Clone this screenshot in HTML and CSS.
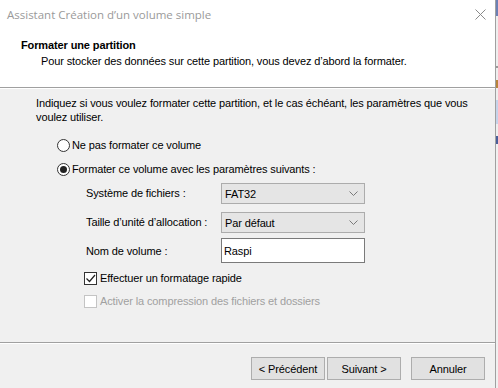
FILE: index.html
```html
<!DOCTYPE html>
<html lang="fr">
<head>
    <meta charset="UTF-8">
    <title>Assistant Création d'un volume simple</title>
    <link rel="stylesheet" href="styles.css">
</head>
<body>

<div class="screen">
    <div class="dialog">
        <header class="head">
            <div class="titlebar">
                <span class="title">Assistant Création d’un volume simple</span>
                <svg class="close" width="11" height="11" viewBox="0 0 11 11">
                    <path d="M0.5 0.5 L10.5 10.5 M10.5 0.5 L0.5 10.5" stroke="#8a8a8a" stroke-width="1" fill="none"/>
                </svg>
            </div>
            <div class="heading">
                <h1>Formater une partition</h1>
                <p>Pour stocker des données sur cette partition, vous devez d’abord la formater.</p>
            </div>
        </header>

        <main class="content">
            <p class="intro">Indiquez si vous voulez formater cette partition, et le cas échéant, les paramètres que vous voulez utiliser.</p>

            <div class="option">
                <span class="radio"></span>
                <span>Ne pas formater ce volume</span>
            </div>
            <div class="option option-second">
                <span class="radio checked"></span>
                <span>Formater ce volume avec les paramètres suivants :</span>
            </div>

            <div class="fields">
                <span class="label">Système de fichiers :</span>
                <div class="select">
                    <span>FAT32</span>
                    <svg width="9" height="5" viewBox="0 0 9 5"><path d="M0.5 0.5 L4.5 4.5 L8.5 0.5" stroke="#7a7a7a" fill="none"/></svg>
                </div>

                <span class="label">Taille d’unité d’allocation :</span>
                <div class="select">
                    <span>Par défaut</span>
                    <svg width="9" height="5" viewBox="0 0 9 5"><path d="M0.5 0.5 L4.5 4.5 L8.5 0.5" stroke="#7a7a7a" fill="none"/></svg>
                </div>

                <span class="label">Nom de volume :</span>
                <div class="textbox">Raspi</div>
            </div>

            <div class="check">
                <span class="box">
                    <svg width="11" height="11" viewBox="0 0 11 11"><path d="M1.5 5.5 L4.5 8.5 L10 2" stroke="#222" stroke-width="1.2" fill="none"/></svg>
                </span>
                <span>Effectuer un formatage rapide</span>
            </div>
            <div class="check check-disabled">
                <span class="box"></span>
                <span>Activer la compression des fichiers et dossiers</span>
            </div>
        </main>

        <footer class="buttons">
            <div class="btn">&lt; Précédent</div>
            <div class="btn">Suivant &gt;</div>
            <div class="btn btn-cancel">Annuler</div>
        </footer>
    </div>

    <div class="sliver">
        <div class="s-top"></div>
        <div class="s-light"></div>
        <div class="s-line"></div>
        <div class="s-light short"></div>
        <div class="s-orange"></div>
        <div class="s-light short"></div>
        <div class="s-blue"></div>
        <div class="s-light short"></div>
        <div class="s-dark"></div>
        <div class="s-rest"></div>
    </div>
</div>

</body>
</html>
```

FILE: styles.css
```css
body {
    margin: 0;
    font-family: "Liberation Sans", Arial, sans-serif;
    font-size: 11px;
    letter-spacing: -0.12px;
    color: #000;
    background: #f0f0f0;
}
.screen {
    display: flex;
    width: 498px;
    height: 388px;
    overflow: hidden;
}
.dialog {
    width: 495px;
    flex: none;
    display: flex;
    flex-direction: column;
    background-color: #f0f0f0;
    border-right: 1px solid #a0a0a0;
}

/* --- header --- */
.head {
    height: 88px;
    box-sizing: border-box;
    background-color: #ffffff;
    border-bottom: 1px solid #a0a0a0;
}
.titlebar {
    height: 28px;
    display: flex;
    align-items: center;
    justify-content: space-between;
    padding: 0 9px 0 7px;
}
.title {
    font-family: "Open Sans", sans-serif;
    font-size: 11.5px;
    letter-spacing: 0;
    color: #9a9a9a;
}
.heading {
    padding: 9px 0 0 21px;
}
.heading h1 {
    margin: 0;
    font-size: 11px;
    font-weight: bold;
    line-height: 16px;
}
.heading p {
    margin: 0 0 0 20px;
    line-height: 16px;
}

/* --- body --- */
.content {
    flex: 1;
    border-top: 1px solid #ffffff;
    padding: 7px 0 0 36px;
}
.intro {
    margin: 0;
    width: 450px;
    line-height: 14px;
}
.option {
    display: flex;
    align-items: center;
    gap: 2px;
    height: 18px;
    margin: 12px 0 0 21px;
}
.option-second {
    margin-top: 6px;
}
.radio {
    width: 11px;
    height: 11px;
    border: 1px solid #333;
    border-radius: 50%;
    background: #fff;
    display: flex;
    align-items: center;
    justify-content: center;
}
.radio.checked::after {
    content: "";
    width: 7px;
    height: 7px;
    border-radius: 50%;
    background: #222;
}
.fields {
    display: grid;
    grid-template-columns: 135px 144px;
    grid-auto-rows: 22px;
    row-gap: 7px;
    margin: 5px 0 0 50px;
}
.label {
    align-self: center;
    padding-bottom: 3px;
}
.select {
    display: flex;
    align-items: center;
    justify-content: space-between;
    background: #e5e5e5;
    border: 1px solid #acacac;
    padding: 0 6px 0 3px;
    box-sizing: border-box;
    height: 21px;
}
.textbox {
    background: #fff;
    border: 1px solid #7a7a7a;
    box-sizing: border-box;
    padding: 0 3px 0 2px;
    display: flex;
    align-items: center;
    margin-top: -3px;
}
.check {
    display: flex;
    align-items: center;
    gap: 3px;
    height: 18px;
    margin: 6px 0 0 48px;
}
.check + .check {
    margin-top: 5px;
}
.box {
    width: 11px;
    height: 11px;
    border: 1px solid #333;
    background: #fff;
    display: flex;
    align-items: center;
    justify-content: center;
}
.check-disabled {
    color: #a0a0a0;
}
.check-disabled .box {
    border-color: #c4c4c4;
}

/* --- buttons --- */
.buttons {
    height: 46px;
    box-sizing: border-box;
    border-top: 1px solid #a0a0a0;
    box-shadow: inset 0 1px #ffffff;
    display: flex;
    justify-content: flex-end;
    align-items: flex-start;
    padding: 14px 10px 0 0;
    gap: 2px;
}
.btn {
    width: 74px;
    height: 23px;
    box-sizing: border-box;
    background: #e1e1e1;
    border: 1px solid #adadad;
    display: flex;
    align-items: center;
    justify-content: center;
}
.btn-cancel {
    margin-left: 8px;
}

/* --- neighbour window edge --- */
.sliver {
    flex: 1;
    display: flex;
    flex-direction: column;
    background: #f0f0f0;
}
.s-top { height: 16px; background: #6c80b4; }
.s-light { height: 50px; background: #eeeeee; }
.s-light.short { height: 12px; }
.s-line { height: 2px; background: #9a9a9a; }
.s-orange { height: 8px; background: #b8843c; }
.s-blue { height: 24px; background: #c5d3ea; }
.s-dark { height: 8px; background: #4a5f9a; }
.s-rest { flex: 1; background: #f0f0f0; }
```
